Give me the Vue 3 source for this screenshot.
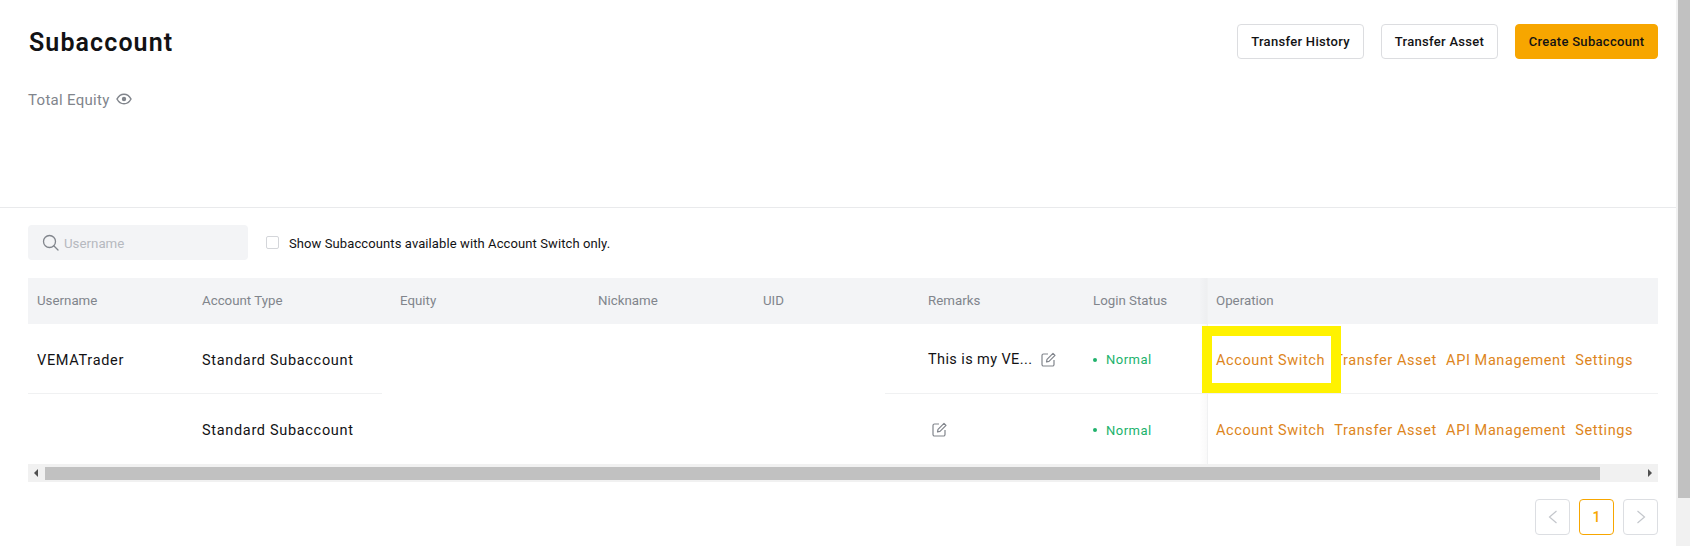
<script setup>
const columns = ['Username', 'Account Type', 'Equity', 'Nickname', 'UID', 'Remarks', 'Login Status']
const links = ['Account Switch', 'Transfer Asset', 'API Management', 'Settings']
const rows = [
  { user: 'VEMATrader', remark: 'This is my VE...' },
  { user: '', remark: '' },
]
</script>

<template>
  <div class="page">
    <main class="main">
      <header class="top">
        <div class="title-row">
          <h1>Subaccount</h1>
          <div class="actions">
            <button class="btn hist">Transfer History</button>
            <button class="btn asset">Transfer Asset</button>
            <button class="btn primary">Create Subaccount</button>
          </div>
        </div>
        <div class="equity">
          <span>Total Equity</span>
          <svg width="16" height="14" viewBox="0 0 16 14" fill="none" stroke="#81858c" stroke-width="1.500">
            <path d="M1 7c1.600-3 4-4.800 7-4.800S13.400 4 15 7c-1.600 3-4 4.800-7 4.800S2.600 10 1 7z" />
            <circle cx="8" cy="7" r="2.200" fill="#81858c" stroke="none" />
          </svg>
        </div>
      </header>

      <section class="content">
        <div class="filters">
          <div class="search">
            <svg width="17" height="17" viewBox="0 0 17 17" fill="none" stroke="#81858c" stroke-width="1.300">
              <circle cx="7.500" cy="7.500" r="6" />
              <path d="M12 12l4 4" stroke-linecap="round" />
            </svg>
            <span class="placeholder">Username</span>
          </div>
          <label class="check">
            <i class="box"></i>
            <span>Show Subaccounts available with Account Switch only.</span>
          </label>
        </div>

        <div class="table">
          <div class="grid head">
            <div v-for="c in columns" :key="c" class="cell">{{ c }}</div>
            <div class="cell op">Operation</div>
          </div>

          <template v-for="(r, i) in rows" :key="i">
            <div class="grid row">
              <div class="cell">{{ r.user }}</div>
              <div class="cell">Standard Subaccount</div>
              <div class="cell"></div>
              <div class="cell"></div>
              <div class="cell"></div>
              <div class="cell remark" :class="{ empty: !r.remark }">
                <span v-if="r.remark" class="remark-text">{{ r.remark }}</span>
                <svg width="15" height="15" viewBox="0 0 15 15" fill="none" stroke="#81858c" stroke-width="1.200">
                  <path d="M7 2H2.500A1.500 1.500 0 0 0 1 3.500v9A1.500 1.500 0 0 0 2.500 14h9a1.500 1.500 0 0 0 1.500-1.500V8" />
                  <path d="M5.500 9.800l.5-2.400L12 1.400l2 2-6 6z" stroke-linejoin="round" />
                </svg>
              </div>
              <div class="cell status"><i class="dot"></i>Normal</div>
              <div class="cell op links">
                <a v-for="l in links" :key="l">{{ l }}</a>
              </div>
            </div>
            <div v-if="i === 0" class="rule">
              <i class="seg-a"></i>
              <i class="seg-b"></i>
              <i class="seg-c"></i>
            </div>
          </template>

          <div class="hscroll">
            <span class="arr-l"></span>
            <span class="hthumb"></span>
            <span class="arr-r"></span>
          </div>

          <div class="highlight"></div>
        </div>

        <nav class="pager">
          <span class="pg">
            <svg width="10" height="14" viewBox="0 0 10 14" fill="none" stroke="#c4c7cc" stroke-width="1.200"><path d="M8.500 1L1.500 7l7 6" /></svg>
          </span>
          <span class="pg current">1</span>
          <span class="pg">
            <svg width="10" height="14" viewBox="0 0 10 14" fill="none" stroke="#c4c7cc" stroke-width="1.200"><path d="M1.500 1l7 6-7 6" /></svg>
          </span>
        </nav>
      </section>
    </main>

    <aside class="vscroll"><span class="vthumb"></span></aside>
  </div>
</template>

<style>
html, body { margin: 0; background: #fff; overflow: hidden; }
</style>

<style scoped>
.page {
  display: flex;
  width: 1690px;
  height: 546px;
  overflow: hidden;
  font-family: Roboto, "Liberation Sans", sans-serif;
  color: #121214;
}
.main { flex: 1; min-width: 0; }
.top {
  box-sizing: border-box;
  height: 208px;
  padding: 24px 18px 0 28px;
  border-bottom: 1px solid #e9eaec;
}
.title-row { display: flex; justify-content: space-between; align-items: flex-start; }
h1 {
  margin: 1px 0 0 1px;
  font-size: 25px;
  line-height: 36px;
  font-weight: 600;
  letter-spacing: 1.100px;
}
.actions { display: flex; gap: 17px; }
.btn {
  height: 35px;
  box-sizing: border-box;
  border: 1px solid #dcdde0;
  border-radius: 4px;
  background: #fff;
  color: #121214;
  font: 500 13px Roboto, sans-serif;
  letter-spacing: 0.3px;
  padding: 0;
}
.hist { width: 127px; }
.asset { width: 117px; }
.primary { width: 143px; background: #f7a600; border-color: #f7a600; }
.equity {
  display: flex;
  align-items: center;
  gap: 6px;
  margin-top: 27px;
  height: 24px;
  font-size: 15px;
  letter-spacing: 0.3px;
  color: #81858c;
}
.equity svg { margin-top: -3px; }
.content { padding: 17px 18px 0 28px; }
.filters { display: flex; align-items: center; gap: 18px; height: 35px; }
.search {
  display: flex;
  align-items: center;
  gap: 5px;
  width: 220px;
  height: 35px;
  box-sizing: border-box;
  padding-left: 14px;
  border-radius: 4px;
  background: #f3f4f6;
  color: #b6b9bf;
  font-size: 13.300px;
}
.placeholder { padding-top: 1px; }
.check {
  display: flex;
  align-items: center;
  gap: 10px;
  font-size: 13px;
  letter-spacing: 0.1px;
}
.check span { padding-top: 2px; }
.box {
  width: 13px;
  height: 13px;
  box-sizing: border-box;
  border: 1px solid #d4d6da;
  border-radius: 2px;
}
.table { position: relative; margin-top: 18px; }
.grid {
  display: grid;
  grid-template-columns: 165px 198px 198px 165px 165px 165px 123px 451px;
}
.cell {
  display: flex;
  align-items: center;
  padding-left: 9px;
  min-width: 0;
  white-space: nowrap;
}
.head {
  height: 46px;
  background: #f3f4f6;
  color: #81858c;
  font-size: 13.300px;
}
.head .cell { padding-bottom: 2px; }
.row { height: 69px; font-size: 14.500px; letter-spacing: 0.680px; }
.row .cell { padding-top: 2px; box-sizing: border-box; }
.head + .row .cell { padding-top: 4px; }
.head + .row .remark, .head + .row .status { padding-top: 2px; }
.row .remark.empty { padding-top: 0; }
.op { position: relative; border-left: 1px solid #f0f1f2; padding-left: 8px; }
.op::before {
  content: "";
  position: absolute;
  top: 0;
  bottom: 0;
  left: -9px;
  width: 8px;
  background: linear-gradient(to right, rgba(0, 0, 0, 0), rgba(0, 0, 0, 0.025));
}
.remark { gap: 9px; }
.remark-text { letter-spacing: 0.400px; }
.remark.empty { padding-left: 13px; }
.status { color: #20b26c; font-size: 13px; letter-spacing: 0.5px; }
.dot {
  width: 4px;
  height: 4px;
  border-radius: 50%;
  background: #20b26c;
  margin-right: 9px;
}
.links { gap: 9.300px; color: #dd8520; letter-spacing: 0.600px; }
.rule { display: flex; height: 1px; }
.seg-a { width: 354px; background: #f0f1f2; }
.seg-b { width: 503px; }
.seg-c { flex: 1; background: #f0f1f2; }
.row + .rule + .row { height: 70px; }
.hscroll {
  display: flex;
  align-items: center;
  height: 18px;
  background: #f1f1f1;
}
.arr-l {
  box-sizing: border-box;
  width: 17px;
  padding-left: 6px;
  display: flex;
}
.arr-l::before {
  content: "";
  border: 4px solid transparent;
  border-left-width: 0;
  border-right: 4px solid #505050;
}
.hthumb { width: 1555px; height: 13px; background: #c1c1c1; }
.arr-r { margin-left: auto; margin-right: 6px; }
.arr-r::before {
  content: "";
  display: block;
  border: 4px solid transparent;
  border-right-width: 0;
  border-left: 4px solid #505050;
}
.highlight {
  position: absolute;
  left: 1174px;
  top: 48px;
  width: 139px;
  height: 67px;
  box-sizing: border-box;
  border: 10px solid #fff200;
}
.pager { display: flex; justify-content: flex-end; gap: 9px; margin-top: 17px; }
.pg {
  display: flex;
  align-items: center;
  justify-content: center;
  width: 35px;
  height: 36px;
  box-sizing: border-box;
  border: 1px solid #dcdee2;
  border-radius: 4px;
  font-size: 14px;
  font-weight: 500;
}
.current { border-color: #f7a600; color: #f7a600; }
.vscroll {
  flex: 0 0 14px;
  height: 546px;
  background: #f1f1f1;
  display: flex;
  justify-content: flex-end;
}
.vthumb { width: 12px; height: 498px; background: #c1c1c1; }
</style>
